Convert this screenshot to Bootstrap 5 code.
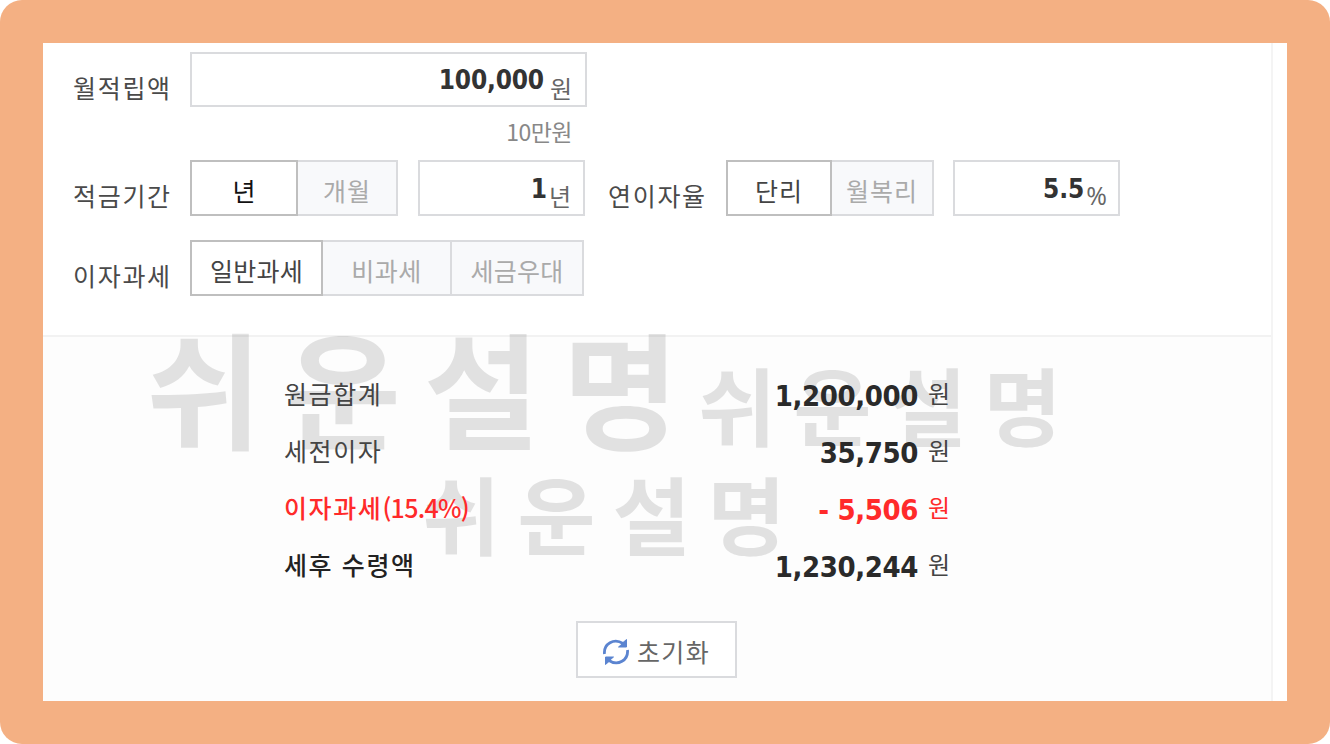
<!DOCTYPE html>
<html lang="ko">
<head>
  <meta charset="UTF-8">
  <meta name="viewport" content="width=device-width, initial-scale=1.0">
  <title>적금 이자 계산기</title>
  <link href="https://cdn.jsdelivr.net/npm/bootstrap@5.3.3/dist/css/bootstrap.min.css" rel="stylesheet">
  <style>
    body {
      font-family: "Noto Sans CJK KR", sans-serif;
      font-size: 25px;
      line-height: 36px;
      color: #4a4a4a;
      background: #fff;
    }

    .frame {
      width: 1330px;
      height: 744px;
      padding: 43px;
      background: #f4b083;
      border-radius: 22px;
    }

    .calc {
      width: 1230px;
      border-right: 2px solid #f4f4f4;
    }

    .inputs {
      height: 294px;
      padding-top: 9px;
      border-bottom: 2px solid #f2f2f2;
    }

    .field-label {
      width: 147px;
      padding: 17px 0 0 30px;
      letter-spacing: 1.7px;
    }

    .rate-label {
      width: 141px;
      padding-left: 23px;
    }

    .field {
      width: 167px;
      height: 56px;
      padding-right: 12px;
      border: 2px solid #dadbde;
      background: #fff;
    }

    .field-wide {
      width: 397px;
      height: 55px;
      padding-right: 13px;
    }

    .num {
      font-family: "DejaVu Sans Condensed", "DejaVu Sans", sans-serif;
      font-stretch: condensed;
      font-weight: bold;
      font-size: 26px;
      color: #333;
    }

    .field .num {
      padding-top: 9px;
      margin-right: 2px;
    }

    .field-wide .num {
      padding-top: 8px;
      margin-right: 6px;
      letter-spacing: -.2px;
    }

    .unit {
      font-size: 24px;
      color: #666;
      padding-top: 16px;
    }

    .field .percent {
      padding-top: 15px;
      font-family: "Open Sans", sans-serif;
      font-size: 25px;
      margin-right: -1px;
    }

    .hint {
      width: 529px;
      height: 53px;
      padding-top: 6px;
      font-size: 23px;
      letter-spacing: -.5px;
      color: #888;
    }

    .seg {
      height: 56px;
      padding: 3px 0 0;
      border: 2px solid #dadbde;
      border-left-width: 0;
      border-radius: 0;
      background: #f8f9fb;
      color: #aaa;
      font-size: 25px;
      line-height: 48px;
    }

    .seg.active {
      border: 2px solid #bfbfbf;
      background: #fff;
      color: #444;
    }

    .seg-year.active {
      color: #111;
    }

    .seg-year { width: 108px; }
    .seg-month { width: 100px; letter-spacing: 1px; }
    .seg-simple { width: 106px; letter-spacing: 1px; }
    .seg-comp { width: 102px; letter-spacing: 1px; }
    .seg-normal { width: 133px; letter-spacing: .3px; }
    .seg-free { width: 129px; letter-spacing: .5px; }
    .seg-prefer { width: 132px; letter-spacing: .3px; }
    .term { margin-left: 20px; }
    .rate { margin-left: 19px; }
    .tax-line { margin-top: 24px; }

    .results {
      padding: 38px 0 0 241px;
      background: #fdfdfd;
    }

    .result-row {
      position: relative;
      z-index: 1;
      width: 667px;
      height: 57px;
      color: #444;
      letter-spacing: 1.6px;
    }

    .result-row .num {
      padding-top: 3px;
      font-size: 29px;
      letter-spacing: -.4px;
      color: #2a2a2a;
      margin-right: 10px;
    }

    .result-row .won {
      font-size: 24px;
      letter-spacing: 0;
      width: 23px;
    }

    .tax, .result-row.tax .num {
      color: #ff2a2a;
    }

    .tax-name {
      font-weight: 500;
    }

    .tax-rate {
      letter-spacing: -.7px;
    }

    .total-name {
      font-weight: 500;
      color: #222;
    }

    .reset {
      width: 161px;
      height: 57px;
      margin: 18px 0 0 292px;
      border: 2px solid #dadbde;
      border-radius: 0;
      background: #fff;
      color: #666;
      font-size: 25px;
      letter-spacing: 1.3px;
    }

    .reset svg {
      margin-top: 5px;
    }

    .reset span {
      padding-top: 4px;
    }

    /* watermark text lies behind the result rows */
    .watermark {
      position: absolute;
      font-weight: bold;
      line-height: 1;
      white-space: nowrap;
      color: rgba(0, 0, 0, .11);
    }

    .wm-big {
      left: 146px;
      top: 322px;
      font-size: 126px;
      letter-spacing: 23px;
    }

    .wm-right {
      left: 698px;
      top: 360px;
      font-size: 85px;
      letter-spacing: 17px;
    }

    .wm-low {
      left: 422px;
      top: 469px;
      font-size: 85px;
      letter-spacing: 17px;
    }
  </style>
</head>
<body>

<div class="frame position-relative">
  <div class="bg-white h-100">
    <div class="calc h-100 d-flex flex-column">

      <!-- Inputs -->
      <div class="inputs">
        <div class="d-flex">
          <div class="field-label">월적립액</div>
          <div class="field field-wide d-flex justify-content-end">
            <span class="num">100,000</span><span class="unit">원</span>
          </div>
        </div>
        <div class="hint text-end">10만원</div>

        <div class="d-flex">
          <div class="field-label">적금기간</div>
          <div class="d-flex">
            <button class="btn seg active seg-year">년</button>
            <button class="btn seg seg-month">개월</button>
          </div>
          <div class="field term d-flex justify-content-end">
            <span class="num">1</span><span class="unit">년</span>
          </div>
          <div class="field-label rate-label">연이자율</div>
          <div class="d-flex">
            <button class="btn seg active seg-simple">단리</button>
            <button class="btn seg seg-comp">월복리</button>
          </div>
          <div class="field rate d-flex justify-content-end">
            <span class="num">5.5</span><span class="unit percent">%</span>
          </div>
        </div>

        <div class="d-flex tax-line">
          <div class="field-label">이자과세</div>
          <button class="btn seg active seg-normal">일반과세</button>
          <button class="btn seg seg-free">비과세</button>
          <button class="btn seg seg-prefer">세금우대</button>
        </div>
      </div>

      <!-- Results -->
      <div class="results flex-grow-1">
        <div class="result-row d-flex">
          <span class="me-auto">원금합계</span><span class="num">1,200,000</span><span class="won">원</span>
        </div>
        <div class="result-row d-flex">
          <span class="me-auto">세전이자</span><span class="num">35,750</span><span class="won">원</span>
        </div>
        <div class="result-row d-flex tax">
          <span class="me-auto tax-name">이자과세<span class="tax-rate">(15.4%)</span></span><span class="num">- 5,506</span><span class="won">원</span>
        </div>
        <div class="result-row d-flex">
          <span class="me-auto total-name">세후 수령액</span><span class="num">1,230,244</span><span class="won">원</span>
        </div>
        <button class="btn reset d-flex align-items-center justify-content-center p-0 gap-2">
          <svg width="26" height="26" viewBox="0 0 26 26" fill="none" stroke="#5b84d0" stroke-width="2.8">
            <path d="M1.5 15C.5 5 11-1.500 20 4.500M24.500 11C25.500 21 15 27.500 6 21.500"/>
            <path d="M23.500.5V8H15.500L19 5L20 3.500ZM2.500 25.500V18H10.500L7 21L6 22.500Z" fill="#5b84d0" stroke-width="1"/>
          </svg>
          <span>초기화</span>
        </button>
      </div>

    </div>
  </div>

  <div class="watermark wm-big">쉬운설명</div>
  <div class="watermark wm-right">쉬운설명</div>
  <div class="watermark wm-low">쉬운설명</div>
</div>

<script src="https://cdn.jsdelivr.net/npm/bootstrap@5.3.3/dist/js/bootstrap.bundle.min.js"></script>
</body>
</html>
